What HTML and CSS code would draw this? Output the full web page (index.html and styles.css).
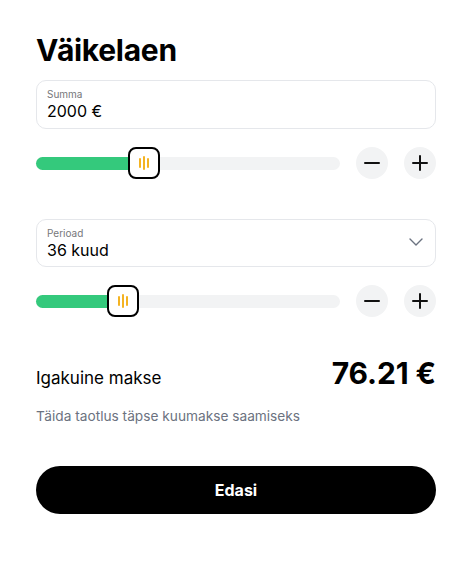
FILE: index.html
```html
<!DOCTYPE html>
<html lang="et">
<head>
<meta charset="utf-8">
<link rel="stylesheet" href="styles.css">
</head>
<body>
<main class="calc">
  <h1 class="title">Väikelaen</h1>

  <div class="field">
    <span class="field-label">Summa</span>
    <span class="field-value">2000 €</span>
  </div>
  <div class="slider-row">
    <div class="track">
      <div class="fill" style="width: 33%"></div>
      <div class="thumb" style="left: 33%"><span class="grip"><i></i><i class="tall"></i><i></i></span></div>
    </div>
    <button class="round-btn" aria-label="Vähenda">
      <svg viewBox="0 0 20 20" width="20" height="20"><path d="M3 10h14" stroke="#111" stroke-width="2" stroke-linecap="round"/></svg>
    </button>
    <button class="round-btn" aria-label="Suurenda">
      <svg viewBox="0 0 20 20" width="20" height="20"><path d="M3 10h14M10 3v14" stroke="#111" stroke-width="2" stroke-linecap="round"/></svg>
    </button>
  </div>

  <div class="field field-select">
    <div class="field-text">
      <span class="field-label">Perioad</span>
      <span class="field-value">36 kuud</span>
    </div>
    <svg class="chevron" viewBox="0 0 14 8" width="14" height="8"><path d="M1 1l6 6 6-6" fill="none" stroke="#6b7280" stroke-width="1.4" stroke-linecap="round" stroke-linejoin="round"/></svg>
  </div>
  <div class="slider-row">
    <div class="track">
      <div class="fill" style="width: 26%"></div>
      <div class="thumb" style="left: 26%"><span class="grip"><i></i><i class="tall"></i><i></i></span></div>
    </div>
    <button class="round-btn" aria-label="Vähenda">
      <svg viewBox="0 0 20 20" width="20" height="20"><path d="M3 10h14" stroke="#111" stroke-width="2" stroke-linecap="round"/></svg>
    </button>
    <button class="round-btn" aria-label="Suurenda">
      <svg viewBox="0 0 20 20" width="20" height="20"><path d="M3 10h14M10 3v14" stroke="#111" stroke-width="2" stroke-linecap="round"/></svg>
    </button>
  </div>

  <div class="result">
    <span class="result-label">Igakuine makse</span>
    <span class="result-value">76.21 €</span>
  </div>
  <p class="note">Täida taotlus täpse kuumakse saamiseks</p>

  <button class="primary">Edasi</button>
</main>
</body>
</html>
```

FILE: styles.css
```css
* { box-sizing: border-box; }
html, body { margin: 0; padding: 0; background: #fff; }
body { font-family: Inter, "Noto Sans", sans-serif; color: #000; }

.calc {
  width: 400px;
  margin-left: 36px;
  padding-top: 28px;
  display: flex;
  flex-direction: column;
}

.title {
  margin: 0;
  font-size: 30px;
  font-weight: 700;
  line-height: 44px;
  letter-spacing: -0.3px;
}

.field {
  margin-top: 8px;
  height: 49px;
  border: 1px solid #e5e7eb;
  border-radius: 10px;
  padding: 7px 10px 0;
  display: flex;
  flex-direction: column;
}
.field-select {
  margin-top: 40px;
  height: 48px;
  flex-direction: row;
  align-items: center;
  justify-content: space-between;
  padding: 0 12px 0 10px;
}
.field-text { display: flex; flex-direction: column; padding-top: 1px; }
.field-label {
  font-size: 10px;
  line-height: 12px;
  color: #76777a;
}
.field-value {
  font-size: 16px;
  line-height: 22px;
  color: #000;
}
.chevron { margin-top: -2px; }

.slider-row {
  margin-top: 18px;
  height: 32px;
  display: flex;
  align-items: center;
  gap: 16px;
}
.track {
  position: relative;
  width: 304px;
  height: 13px;
  border-radius: 7px;
  background: #f2f3f4;
}
.fill {
  height: 100%;
  border-radius: 7px;
  background: #34c97c;
}
.thumb {
  position: absolute;
  top: 50%;
  width: 32px;
  height: 32px;
  margin-left: -8px;
  transform: translateY(-50%);
  background: #fff;
  border: 2.5px solid #000;
  border-radius: 8px;
  display: flex;
  align-items: center;
  justify-content: center;
}
.grip { display: flex; align-items: center; gap: 2px; }
.grip i {
  display: block;
  width: 2px;
  height: 10px;
  border-radius: 1px;
  background: #f4b322;
}
.grip i.tall { height: 14px; }

.round-btn {
  width: 32px;
  height: 32px;
  border: 0;
  padding: 0;
  border-radius: 50%;
  background: #f2f3f4;
  display: flex;
  align-items: center;
  justify-content: center;
  flex-shrink: 0;
}

.result {
  margin-top: 38px;
  display: flex;
  align-items: center;
  justify-content: space-between;
  height: 36px;
}
.result-label { font-size: 17px; line-height: 22px; margin-top: 10px; }
.result-value {
  font-size: 30px;
  font-weight: 700;
  line-height: 36px;
  letter-spacing: -0.1px;
}

.note {
  margin: 15px 0 0;
  font-size: 13.7px;
  line-height: 20px;
  color: #6b7280;
}

.primary {
  margin-top: 40px;
  height: 48px;
  border: 0;
  border-radius: 24px;
  background: #000;
  color: #fff;
  font-family: Inter, sans-serif;
  font-size: 16px;
  font-weight: 700;
}
```
